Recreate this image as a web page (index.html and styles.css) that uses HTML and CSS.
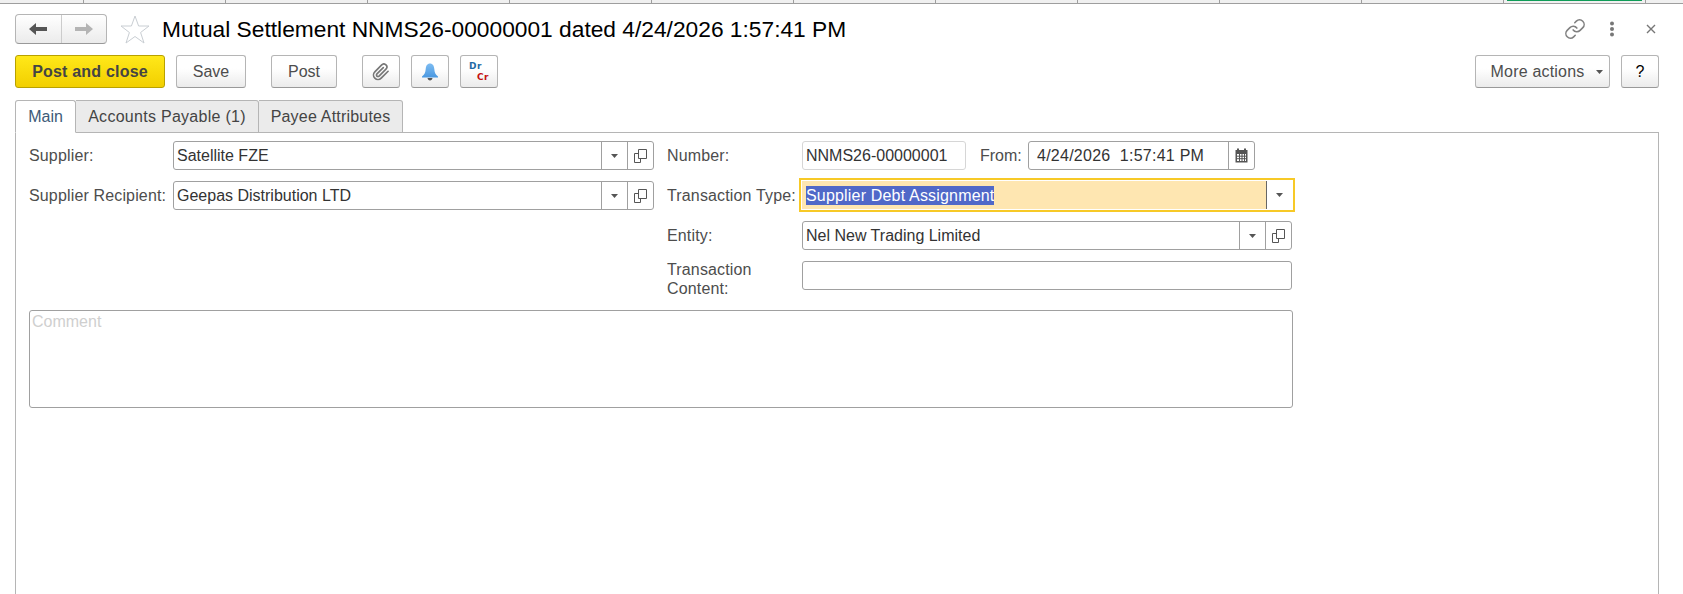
FILE: index.html
```html
<!DOCTYPE html>
<html lang="en">
<head>
  <meta charset="UTF-8">
  <meta name="viewport" content="width=device-width, initial-scale=1.0">
  <title>Mutual Settlement</title>
  <link rel="stylesheet" href="styles.css">
</head>
<body>

<svg class="sprite" width="0" height="0">
  <symbol id="caret" viewBox="0 0 7 4"><path d="M0 0H7L3.5 4Z" fill="#555"/></symbol>
  <symbol id="open" viewBox="0 0 13 14"><path d="M4.5 .5H12.5V9.5H4.5ZM4.5 4.5H.5V13.5H6.5V9.5" fill="none" stroke="#555"/></symbol>
</svg>

<div class="window-strip">
  <span class="strip-cell"></span><span class="strip-cell"></span><span class="strip-cell"></span>
  <span class="strip-cell"></span><span class="strip-cell"></span><span class="strip-cell"></span>
  <span class="strip-cell"></span><span class="strip-cell"></span><span class="strip-cell"></span>
  <span class="strip-cell"></span><span class="strip-cell active"></span><span class="strip-cell last"></span>
</div>

<div class="page">

  <header class="title-row">
    <div class="nav-group">
      <button class="nav-btn">
        <svg width="18" height="14" viewBox="0 0 18 14"><path d="M0 7L7 1V5H18V9H7V13Z" fill="#555"/></svg>
      </button>
      <button class="nav-btn">
        <svg width="18" height="14" viewBox="0 0 18 14"><path d="M18 7L11 1V5H0V9H11V13Z" fill="#b4b4b4"/></svg>
      </button>
    </div>
    <svg class="star" width="30" height="29" viewBox="0 0 30 29"><path d="M15 1L18.6 11H29L20.6 17.5L24 28L15 21.5L6 28L9.4 17.5L1 11H11.4Z" fill="#fff" stroke="#c9ced3"/></svg>
    <h1 class="doc-title">Mutual Settlement NNMS26-00000001 dated 4/24/2026 1:57:41 PM</h1>
    <div class="window-actions">
      <svg width="22" height="22" viewBox="0 0 24 24" fill="none" stroke="#808080" stroke-width="1.7" stroke-linecap="round"><path d="M10 13a5 5 0 0 0 7.54.54l3-3a5 5 0 0 0-7.07-7.07l-1.72 1.71"/><path d="M14 11a5 5 0 0 0-7.54-.54l-3 3a5 5 0 0 0 7.07 7.07l1.71-1.71"/></svg>
      <svg class="kebab" width="6" height="16" viewBox="0 0 6 16" fill="#777"><circle cx="3" cy="2.5" r="2"/><circle cx="3" cy="8" r="2"/><circle cx="3" cy="13.5" r="2"/></svg>
      <svg class="close" width="10" height="10" viewBox="0 0 10 10" stroke="#777" stroke-width="1.4"><path d="M1 1L9 9M9 1L1 9"/></svg>
    </div>
  </header>

  <div class="toolbar">
    <button class="btn primary">Post and close</button>
    <button class="btn save">Save</button>
    <button class="btn post">Post</button>
    <button class="btn icon clip">
      <svg width="18" height="18" viewBox="0 0 24 24" fill="none" stroke="#777" stroke-width="2.2" stroke-linecap="round" stroke-linejoin="round"><path d="M21.44 11.05l-9.19 9.19a6 6 0 0 1-8.49-8.49l9.19-9.19a4 4 0 0 1 5.66 5.66l-9.2 9.19a2 2 0 0 1-2.83-2.83l8.49-8.48"/></svg>
    </button>
    <button class="btn icon">
      <svg width="18" height="18" viewBox="0 0 18 18"><defs><linearGradient id="bell" x1="0" y1="0" x2="0" y2="1"><stop offset="0" stop-color="#7dbcf2"/><stop offset="1" stop-color="#4a98e0"/></linearGradient></defs><path d="M9 0.5C11.800 0.500 13 2.800 13.300 6C13.600 9.500 14.500 11.800 17 13.500V14.500H1V13.500C3.500 11.800 4.400 9.500 4.700 6C5 2.800 6.200 0.500 9 0.500Z" fill="url(#bell)"/><path d="M6.500 15H11.500C11.300 16.500 10.300 17.500 9 17.500C7.700 17.500 6.700 16.500 6.500 15Z" fill="#555"/></svg>
    </button>
    <button class="btn icon drcr"><span class="dr">Dr</span><span class="cr">Cr</span></button>
    <button class="btn more">More actions<svg class="caret" width="7" height="4"><use href="#caret"/></svg></button>
    <button class="btn help">?</button>
  </div>

  <nav class="tabs">
    <a class="tab current">Main</a>
    <a class="tab payable">Accounts Payable (1)</a>
    <a class="tab payee">Payee Attributes</a>
  </nav>

  <main class="panel">
    <div class="form-columns">
      <div class="col-left">
        <div class="row">
          <label class="label supplier-label">Supplier:</label>
          <div class="field grow">
            <span class="value">Satellite FZE</span>
            <span class="field-btn"><svg width="7" height="4"><use href="#caret"/></svg></span>
            <span class="field-btn"><svg width="13" height="14"><use href="#open"/></svg></span>
          </div>
        </div>
        <div class="row">
          <label class="label supplier-label">Supplier Recipient:</label>
          <div class="field grow">
            <span class="value">Geepas Distribution LTD</span>
            <span class="field-btn"><svg width="7" height="4"><use href="#caret"/></svg></span>
            <span class="field-btn"><svg width="13" height="14"><use href="#open"/></svg></span>
          </div>
        </div>
      </div>

      <div class="col-right">
        <div class="row">
          <label class="label right-label">Number:</label>
          <div class="field number readonly"><span class="value">NNMS26-00000001</span></div>
          <label class="label from-label">From:</label>
          <div class="field date">
            <span class="value">4/24/2026  1:57:41 PM</span>
            <span class="field-btn">
              <svg width="13" height="15" viewBox="0 0 13 15"><path d="M1 2H12.500V14.500H.5V2Z" fill="#555"/><path d="M3 .5V3M10 .5V3" stroke="#555" stroke-width="2"/><path d="M2 6H11V13H2Z" fill="#fff"/><path d="M2 8.200H11M2 10.700H11M4.500 6V13M7 6V13M9.500 6V13" stroke="#555"/></svg>
            </span>
          </div>
        </div>
        <div class="row">
          <label class="label right-label">Transaction Type:</label>
          <div class="field grow focused">
            <span class="value"><span class="selected">Supplier Debt Assignment</span></span>
            <span class="field-btn"><svg width="7" height="4"><use href="#caret"/></svg></span>
          </div>
        </div>
        <div class="row">
          <label class="label right-label">Entity:</label>
          <div class="field grow">
            <span class="value">Nel New Trading Limited</span>
            <span class="field-btn"><svg width="7" height="4"><use href="#caret"/></svg></span>
            <span class="field-btn"><svg width="13" height="14"><use href="#open"/></svg></span>
          </div>
        </div>
        <div class="row tall">
          <label class="label right-label">Transaction Content:</label>
          <div class="field grow"></div>
        </div>
      </div>
    </div>

    <div class="comment">Comment</div>
  </main>

</div>

</body>
</html>
```

FILE: styles.css
```css
body {
  margin: 0;
  height: 594px;
  overflow: hidden;
  background: #fff;
  font-family: "Liberation Sans", Arial, sans-serif;
  font-size: 16px;
  color: #333;
}
button {
  font-family: inherit;
  font-size: inherit;
  margin: 0;
  padding: 0;
  cursor: pointer;
}
.sprite {
  display: block;
  height: 0;
}

/* top strip of the window behind */
.window-strip {
  display: flex;
  height: 3px;
  padding-left: 83px;
  background: #f0f0f0;
  border-bottom: 1px solid #9e9e9e;
}
.strip-cell {
  width: 141px;
  flex: none;
  border-left: 1px solid #9e9e9e;
}
.strip-cell.last {
  width: 37px;
}
.strip-cell.active {
  box-sizing: border-box;
  width: 142px;
  padding: 0 3px;
  background: linear-gradient(#0f9d58, #0f9d58) content-box no-repeat;
  background-size: 100% 1px;
}

.page {
  display: flex;
  flex-direction: column;
  height: 590px;
  padding: 10px 24px 0 15px;
  box-sizing: border-box;
}

/* title */
.title-row {
  display: flex;
  align-items: center;
  height: 30px;
}
.nav-group {
  display: flex;
  width: 92px;
  height: 30px;
  box-sizing: border-box;
  border: 1px solid #b5b5b5;
  border-bottom-color: #999;
  border-radius: 4px;
  background: linear-gradient(#fff, #ebebeb);
}
.nav-btn {
  flex: 1;
  display: flex;
  align-items: center;
  justify-content: center;
  border: 0;
  background: none;
}
.nav-btn + .nav-btn {
  border-left: 1px solid #ccc;
}
.star {
  margin-left: 13px;
}
.doc-title {
  margin: 0 0 0 12px;
  font-size: 22.75px;
  font-weight: normal;
  color: #000;
}
.window-actions {
  display: flex;
  align-items: center;
  margin-left: auto;
  padding-right: 3px;
}
.kebab {
  margin-left: 23px;
}
.close {
  margin-left: 31px;
}

/* toolbar */
.toolbar {
  display: flex;
  height: 33px;
  margin-top: 11px;
}
.btn {
  display: flex;
  align-items: center;
  justify-content: center;
  height: 33px;
  box-sizing: border-box;
  border: 1px solid #b5b5b5;
  border-bottom-color: #999;
  border-radius: 3px;
  background: linear-gradient(#fff 40%, #ebebeb);
  color: #4d4d4d;
}
.btn.primary {
  width: 150px;
  border-color: #b8a100;
  background: linear-gradient(#ffe819, #f2cf00);
  font-weight: bold;
  letter-spacing: .2px;
  color: #444;
}
.btn.save {
  width: 70px;
  margin-left: 11px;
}
.btn.post {
  width: 66px;
  margin-left: 25px;
}
.btn.icon {
  width: 38px;
  margin-left: 11px;
}
.btn.clip {
  margin-left: 25px;
}
.btn.drcr {
  flex-direction: column;
  align-items: flex-start;
  padding-left: 8px;
  font-family: "DejaVu Sans", sans-serif;
  font-size: 9px;
  font-weight: bold;
  letter-spacing: .5px;
  line-height: 11px;
}
.dr {
  color: #1f6aa5;
}
.cr {
  margin-left: 8px;
  color: #c40f0f;
}
.btn.more {
  width: 135px;
  margin-left: auto;
  padding-left: 8px;
  letter-spacing: .2px;
}
.caret {
  margin-left: 11px;
}
.btn.help {
  width: 38px;
  margin-left: 11px;
  color: #000;
}

/* tabs */
.tabs {
  display: flex;
  height: 32px;
  margin-top: 12px;
}
.tab {
  display: flex;
  align-items: center;
  justify-content: center;
  height: 33px;
  box-sizing: border-box;
  border: 1px solid #b5b5b5;
  border-left-width: 0;
  border-radius: 0 3px 0 0;
  background: #ebebeb;
  letter-spacing: .2px;
  color: #444;
}
.tab.current {
  position: relative;
  z-index: 1;
  width: 61px;
  border-left-width: 1px;
  border-bottom-color: #fff;
  border-radius: 3px 3px 0 0;
  background: #fff;
  letter-spacing: 0;
  color: #3d5a78;
}
.tab.payable {
  width: 183px;
  letter-spacing: .28px;
}
.tab.payee {
  width: 144px;
}

/* form */
.panel {
  flex: 1;
  padding: 8px 0 0 13px;
  border: 1px solid #b5b5b5;
  border-bottom: 0;
}
.form-columns {
  display: flex;
  gap: 13px;
  width: 1264px;
}
.col-left {
  width: 625px;
}
.col-right {
  width: 625px;
}
.row {
  display: flex;
  align-items: center;
  height: 29px;
  margin-bottom: 11px;
}
.row.tall {
  align-items: flex-start;
  height: 38px;
  margin-bottom: 0;
}
.label {
  flex: none;
  line-height: 19px;
  letter-spacing: .15px;
  color: #4d4d4d;
}
.row.tall .label {
  margin-top: -1px;
}
.supplier-label {
  width: 144px;
}
.right-label {
  width: 135px;
}
.from-label {
  margin-left: 14px;
  width: 48px;
  letter-spacing: 0;
}
.field {
  display: flex;
  align-items: stretch;
  height: 29px;
  box-sizing: border-box;
  border: 1px solid #a0a0a0;
  border-radius: 3px;
  background: #fff;
}
.grow {
  flex: 1;
}
.value {
  flex: 1;
  align-self: center;
  padding-left: 3px;
  white-space: pre;
}
.field-btn {
  flex: none;
  display: flex;
  align-items: center;
  justify-content: center;
  width: 25px;
  border-left: 1px solid #a0a0a0;
}
.field.number {
  width: 164px;
}
.field.readonly {
  border-color: #d6d6d6;
}
.field.date {
  width: 227px;
}
.field.date .value {
  padding-left: 8px;
  letter-spacing: .25px;
}
.field.focused {
  align-self: flex-start;
  height: 28px;
  border: 0;
  border-radius: 0;
  background: #fee6b1;
  outline: 2px solid #f7c926;
  outline-offset: 1px;
}
.field.focused .field-btn {
  background: #fff;
  border-left-color: #666;
}
.field.focused .value {
  padding-left: 4px;
}
.selected {
  display: inline-block;
  background: #5068c8;
  color: #fff;
  letter-spacing: .18px;
  line-height: 19px;
}
.comment {
  width: 1264px;
  height: 98px;
  margin-top: 11px;
  padding: 2px 2px;
  box-sizing: border-box;
  border: 1px solid #a0a0a0;
  border-radius: 3px;
  color: #cfcfcf;
}
```
